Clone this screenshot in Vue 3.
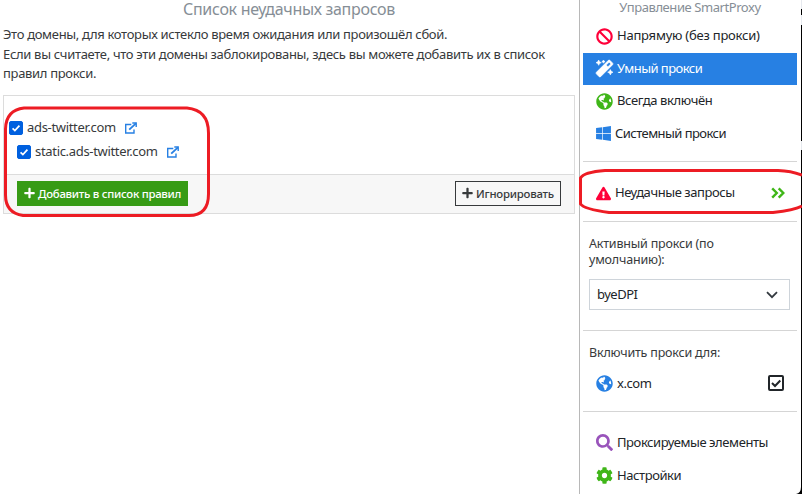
<script setup>
import { ref } from 'vue'

const globe = 'M248 8C111.03 8 0 119.03 0 256s111.03 248 248 248 248-111.03 248-248S384.97 8 248 8zm82.29 357.6c-3.9 3.88-7.99 7.95-11.31 11.28-2.99 3-5.1 6.7-6.17 10.71-1.51 5.66-2.73 11.38-4.77 16.87l-17.39 46.85c-13.76 3-28 4.69-42.65 4.69v-27.38c1.69-12.62-7.64-36.26-22.63-51.25-6-6-9.37-14.14-9.37-22.63v-32.01c0-11.64-6.27-22.34-16.46-27.97-14.37-7.95-34.81-19.06-48.81-26.11-11.48-5.78-22.1-13.14-31.65-21.75l-.8-.72a114.792 114.792 0 0 1-18.06-20.74c-9.38-13.77-24.66-36.42-34.59-51.14 20.47-45.5 57.36-82.04 103.2-101.89l24.01 12.01C203.48 89.74 216 82.01 216 70.11v-11.3c7.99-1.29 16.12-2.11 24.39-2.42l28.3 28.3c6.25 6.25 6.25 16.38 0 22.63L264 112l-10.34 10.34c-3.12 3.12-3.12 8.19 0 11.31l4.69 4.69c3.12 3.12 3.12 8.19 0 11.31l-8 8a8.008 8.008 0 0 1-5.66 2.34h-8.99c-2.08 0-4.08.81-5.58 2.27l-9.92 9.65a8.008 8.008 0 0 0-1.58 9.31l15.59 31.19c2.66 5.32-1.21 11.58-7.15 11.58h-5.64c-1.93 0-3.79-.7-5.24-1.96l-9.28-8.06a16.017 16.017 0 0 0-15.55-3.1l-31.17 10.39a11.95 11.95 0 0 0-8.17 11.34c0 4.53 2.56 8.66 6.61 10.69l11.08 5.54c9.41 4.71 19.79 7.16 30.31 7.16s22.59 27.29 32 32h66.75c8.49 0 16.62 3.37 22.63 9.37l13.69 13.69a30.503 30.503 0 0 1 8.93 21.57 46.536 46.536 0 0 1-13.72 32.98zM417 274.25c-5.79-1.45-10.84-5-14.15-9.97l-17.98-26.97a23.97 23.97 0 0 1 0-26.62l19.59-29.38c2.32-3.47 5.5-6.29 9.24-8.15l12.98-6.49C440.2 193.59 448 223.87 448 256c0 8.67-.74 17.16-1.82 25.54L417 274.25z'
const plus = 'M416 208H272V64c0-17.67-14.33-32-32-32h-32c-17.67 0-32 14.33-32 32v144H32c-17.67 0-32 14.33-32 32v32c0 17.67 14.33 32 32 32h144v144c0 17.67 14.33 32 32 32h32c17.67 0 32-14.33 32-32V304h144c17.67 0 32-14.33 32-32v-32c0-17.67-14.33-32-32-32z'

const modes = [
  { id: 'direct', label: 'Напрямую (без прокси)', color: 'red', box: '0 0 512 512', path: 'M256 8C119.034 8 8 119.033 8 256s111.034 248 248 248 248-111.034 248-248S392.967 8 256 8zm130.108 117.892c65.448 65.448 70 165.481 20.677 235.637L150.47 105.216c70.204-49.356 170.226-44.735 235.638 20.676zM125.892 386.108c-65.448-65.448-70-165.481-20.677-235.637L361.53 406.784c-70.203 49.356-170.226 44.735-235.638-20.676z' },
  { id: 'smart', label: 'Умный прокси', color: 'white', box: '0 0 512 512', path: 'M224 96l16-32 32-16-32-16-16-32-16 32-32 16 32 16 16 32zM80 160l26.66-53.33L160 80l-53.34-26.67L80 0 53.34 53.33 0 80l53.34 26.67L80 160zm352 128l-26.66 53.33L352 368l53.34 26.67L432 448l26.66-53.33L512 368l-53.34-26.67L432 288zm70.62-193.77L417.77 9.38C411.53 3.12 403.34 0 395.15 0c-8.19 0-16.38 3.12-22.63 9.38L9.38 372.52c-12.5 12.5-12.5 32.76 0 45.25l84.85 84.85c6.25 6.25 14.44 9.37 22.62 9.37 8.19 0 16.38-3.12 22.63-9.37l363.14-363.15c12.5-12.48 12.5-32.75 0-45.24zM359.45 203.46l-50.91-50.91 86.6-86.6 50.91 50.91-86.6 86.6z' },
  { id: 'always', label: 'Всегда включён', color: 'green', box: '0 0 496 512', path: globe },
  { id: 'system', label: 'Системный прокси', color: 'blue', narrow: true, box: '0 0 448 512', path: 'M0 93.7l183.6-25.3v177.4H0V93.7zm0 324.6l183.6 25.3V268.4H0v149.9zm203.8 28L448 480V268.4H203.8v177.9zm0-380.6v180.1H448V32L203.8 65.7z' }
]
const links = [
  { label: 'Проксируемые элементы', color: 'purple', path: 'M505 442.7L405.3 343c-4.5-4.5-10.6-7-17-7H372c27.6-35.3 44-79.7 44-128C416 93.1 322.9 0 208 0S0 93.1 0 208s93.1 208 208 208c48.3 0 92.7-16.4 128-44v16.3c0 6.4 2.5 12.5 7 17l99.7 99.7c9.4 9.4 24.6 9.4 33.9 0l28.3-28.3c9.4-9.4 9.4-24.6.1-34zM208 336c-70.7 0-128-57.2-128-128 0-70.7 57.2-128 128-128 70.7 0 128 57.2 128 128 0 70.7-57.2 128-128 128z' },
  { label: 'Настройки', color: 'green', path: 'M487.4 315.7l-42.6-24.6c4.3-23.2 4.3-47 0-70.2l42.6-24.6c4.9-2.8 7.1-8.6 5.5-14-11.1-35.6-30-67.8-54.7-94.6-3.8-4.1-10-5.1-14.8-2.3L380.8 110c-17.9-15.4-38.5-27.3-60.8-35.1V25.8c0-5.6-3.9-10.5-9.4-11.7-36.7-8.2-74.3-7.8-109.2 0-5.5 1.2-9.4 6.1-9.4 11.7V75c-22.2 7.9-42.8 19.8-60.8 35.1L88.7 85.5c-4.9-2.8-11-1.9-14.8 2.3-24.7 26.7-43.6 58.9-54.7 94.6-1.7 5.4.6 11.2 5.5 14L67.3 221c-4.3 23.2-4.3 47 0 70.2l-42.6 24.6c-4.9 2.8-7.1 8.6-5.5 14 11.1 35.6 30 67.8 54.7 94.6 3.8 4.1 10 5.1 14.8 2.3l42.6-24.6c17.9 15.4 38.5 27.3 60.8 35.1v49.2c0 5.6 3.9 10.5 9.4 11.7 36.7 8.2 74.3 7.8 109.2 0 5.5-1.2 9.4-6.1 9.4-11.7v-49.2c22.2-7.9 42.8-19.8 60.8-35.1l42.6 24.6c4.9 2.8 11 1.9 14.8-2.3 24.7-26.7 43.6-58.9 54.7-94.6 1.5-5.5-.7-11.3-5.6-14.1zM256 336c-44.1 0-80-35.9-80-80s35.9-80 80-80 80 35.9 80 80-35.9 80-80 80z' }
]
const domains = ref([
  { name: 'ads-twitter.com', checked: true, nested: false },
  { name: 'static.ads-twitter.com', checked: true, nested: true }
])
const active = ref('smart')
</script>

<template>
  <div class="popup">
    <main class="main">
      <h1>Список неудачных запросов</h1>
      <p class="intro">Это домены, для которых истекло время ожидания или произошёл сбой.<br>Если вы считаете, что эти домены заблокированы, здесь вы можете добавить их в список<br>правил прокси.</p>
      <section class="card">
        <div class="domains">
          <div v-for="d in domains" :key="d.name" class="domain" :class="{ nested: d.nested }">
            <button class="check" :class="{ on: d.checked }" @click="d.checked = !d.checked">
              <svg v-if="d.checked" viewBox="0 0 14 14"><path d="M3 7.4 5.7 10 11 4.3" /></svg>
            </button>
            <span>{{ d.name }}</span>
            <svg class="ext" viewBox="0 0 14 12"><path d="M7.300 2.500H1.700v8.500h8.300V7.500M8.300 1H12.200v4" /><path d="M12 1.400 5.200 7.600" class="arrow" /></svg>
          </div>
        </div>
        <footer class="actions">
          <button class="btn add"><svg viewBox="0 0 448 512"><path :d="plus" /></svg><span>Добавить в список правил</span></button>
          <button class="btn ignore"><svg viewBox="0 0 448 512"><path :d="plus" /></svg><span>Игнорировать</span></button>
        </footer>
      </section>
    </main>

    <aside class="side">
      <h2>Управление SmartProxy</h2>
      <nav class="modes">
        <a v-for="m in modes" :key="m.id" class="item" :class="[m.id, { active: m.id === active, narrow: m.narrow }]" @click="active = m.id">
          <svg class="icon" :class="m.color" :viewBox="m.box"><path fill-rule="evenodd" :d="m.path" /></svg>
          <span>{{ m.label }}</span>
        </a>
      </nav>
      <div class="failed">
        <a class="item narrow">
          <svg class="icon warn red" viewBox="0 0 576 512"><path d="M569.517 440.013C587.975 472.007 564.806 512 527.94 512H48.054c-36.937 0-59.999-40.055-41.577-71.987L246.423 23.985c18.467-32.009 64.72-31.951 83.154 0l239.94 416.028zM288 354c-25.405 0-46 20.595-46 46s20.595 46 46 46 46-20.595 46-46-20.595-46-46-46zm-43.673-165.346l7.418 136c.347 6.364 5.609 11.346 11.982 11.346h48.546c6.373 0 11.635-4.982 11.982-11.346l7.418-136c.375-6.874-5.098-12.654-11.982-12.654h-63.383c-6.884 0-12.356 5.78-11.981 12.654z" /></svg>
          <span>Неудачные запросы</span>
          <svg class="more" viewBox="0 0 14 12"><path d="M1.2 1.3 5.8 6 1.2 10.7M7.7 1.3 12.3 6 7.7 10.7" /></svg>
        </a>
      </div>
      <div class="proxy">
        <label>Активный прокси (по умолчанию):</label>
        <div class="select"><span>byeDPI</span><svg viewBox="0 0 12 8"><path d="M1 1.2 6 6.2 11 1.2" /></svg></div>
      </div>
      <div class="sites">
        <label>Включить прокси для:</label>
        <a class="item">
          <svg class="icon blue" viewBox="0 0 496 512"><path :d="globe" /></svg>
          <span>x.com</span>
          <svg class="box" viewBox="0 0 16 16"><rect x="1" y="1" width="14" height="14" rx="1" /><path d="M4 8 7 11 12.3 5.5" /></svg>
        </a>
      </div>
      <nav class="links">
        <a v-for="l in links" :key="l.label" class="item">
          <svg class="icon" :class="l.color" viewBox="0 0 512 512"><path :d="l.path" /></svg>
          <span>{{ l.label }}</span>
        </a>
      </nav>
    </aside>
    <div class="edge"><i class="gap"></i><i class="dark tick"></i><i class="gap second"></i><i class="dark upper"></i><i class="gap third"></i><i class="dark rest"></i></div>

    <svg class="marks" viewBox="0 0 802 494">
      <path d="M24 108H187Q208.500 110 208.500 133V194Q208.500 215.500 189 215.500H23Q5.500 213 5.500 195V129Q6 110 24 108Z" />
      <path d="M802 175Q791 171 778 170.500H605Q584 172 580.500 178V204Q584 209 609 212.500H773Q795 210 802 206" />
      <path class="corner" d="M802 487V494H796Q801 493 801 487Z" />
    </svg>
  </div>
</template>

<style>
body { background: #fff; overflow: hidden; }
</style>

<style scoped>
* { box-sizing: border-box; }
.popup { position: relative; display: flex; width: 802px; height: 494px; overflow: hidden; font: 13px/19.500px "Noto Sans", sans-serif; color: #373a3c; }
.main { width: 579px; padding: 0 4px 0 3px; }
h1 { margin: 0; height: 25px; font-size: 16px; line-height: 18px; font-weight: 400; letter-spacing: -0.300px; color: #868e96; text-align: center; }
.intro { margin: 0 0 11px; white-space: nowrap; letter-spacing: -0.320px; }
.card { border: 1px solid #dcdcdc; height: 119px; }
.domains { height: 78px; padding: 20px 5px 0; letter-spacing: -0.320px; }
.domain { display: flex; align-items: center; height: 24px; }
.domain.nested { padding-left: 8px; }
.check { flex: none; width: 14px; height: 14px; padding: 0; margin-right: 4px; border: 1px solid #0060df; border-radius: 2px; background: #fff; }
.check.on { background: #0060df; }
.check svg { display: block; width: 12px; height: 12px; }
.check path { fill: none; stroke: #fff; stroke-width: 2; }
.ext { width: 14px; height: 12px; margin-left: 8px; fill: none; stroke: #2780e3; stroke-width: 1.400; }
.ext .arrow { stroke-width: 1.900; }
.actions { display: flex; justify-content: space-between; height: 39px; padding: 6px 13px; border-top: 1px solid #dcdcdc; background: #f7f7f7; }
.btn { display: flex; align-items: center; height: 25px; padding: 0 6px; border: 1px solid #373a3c; background: #fff; color: #373a3c; font: 500 11.400px "Noto Sans", sans-serif; letter-spacing: -0.230px; white-space: nowrap; }
.btn svg { flex: none; width: 11px; height: 12px; margin-right: 3px; fill: currentColor; }
.btn.add { width: 171px; background: #379b15; border-color: #379b15; color: #fff; letter-spacing: -0.270px; }
.btn.ignore { width: 106px; background: #f7f7f7; }
.side { width: 222px; padding: 0 4px 0 3px; border-left: 1px solid #b8b8b8; color: #212529; }
h2 { margin: 0; height: 20px; font-size: 13px; line-height: 14px; font-weight: 400; letter-spacing: -0.430px; color: #868e96; text-align: center; }
.modes { height: 141px; }
.item { display: flex; align-items: center; height: 32px; padding: 0 13px; white-space: nowrap; letter-spacing: -0.420px; }
.item.direct { letter-spacing: -0.230px; }
.item.smart, .item.system { letter-spacing: -0.550px; }
.item.always { letter-spacing: -0.360px; }
.modes .item { margin-bottom: 0.500px; }
.item.active { height: 32px; background: #2780e3; color: #fff; }
.icon { flex: none; width: 17px; height: 17px; margin-right: 4px; fill: currentColor; }
.smart .icon { stroke: currentColor; stroke-width: 18; overflow: visible; }
.narrow .icon { width: 15px; }
.red { color: #ff0039; }
.white { color: #fff; }
.green { color: #3fb618; }
.blue { color: #2780e3; }
.purple { color: #9954bb; }
.failed { height: 60px; padding-top: 15px; border-top: 1px solid #d5d5d5; }
.more { width: 14px; height: 12px; margin-left: auto; margin-right: -1px; fill: none; stroke: #3fb618; stroke-width: 2.400; }
.proxy { height: 109px; padding: 14px 7px 0 6px; border-top: 1px solid #d5d5d5; }
label { display: block; font-size: 12.500px; line-height: 16px; letter-spacing: -0.190px; color: #373a3c; }
.select { display: flex; align-items: center; justify-content: space-between; height: 31px; margin-top: 11px; padding: 0 11px 0 7px; border: 1px solid #ced4da; letter-spacing: -0.500px; }
.select svg { width: 12px; height: 8px; fill: none; stroke: #343a40; stroke-width: 1.800; }
.sites { height: 81px; padding-top: 14px; border-top: 1px solid #d5d5d5; }
.sites label { padding-left: 6px; }
.sites .item { margin-top: 7px; }
.sites .icon, .sites .box { margin-top: -2px; }
.box { width: 16px; height: 16px; margin-left: auto; fill: none; stroke: #212529; stroke-width: 2; }
.links { padding-top: 15px; border-top: 1px solid #d5d5d5; }
.links .item { margin-bottom: 1px; }
.links .icon { margin-top: -2px; }
.edge { display: flex; flex-direction: column; width: 1px; height: 494px; }
.edge i { flex: none; display: block; background: #e6e9ee; }
.edge .dark { background: #000; }
.edge .gap { height: 9px; }
.edge .tick { height: 6px; }
.edge .second { height: 10px; }
.edge .upper { height: 116px; }
.edge .third { height: 9px; }
.edge .rest { height: 344px; }
.marks { position: absolute; inset: 0; width: 802px; height: 494px; fill: none; stroke: #ed1c24; stroke-width: 3; pointer-events: none; }
.corner { fill: #000; stroke: none; }
</style>
